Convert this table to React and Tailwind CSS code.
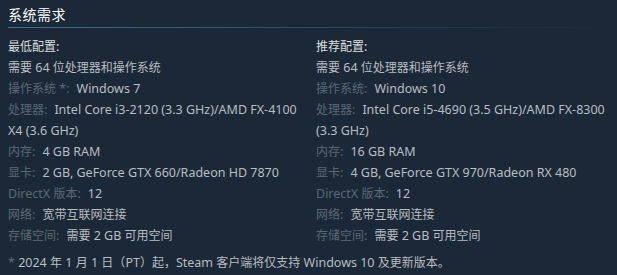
import React from "react";

const FONT = { fontFamily: '"Noto Sans", "Noto Sans CJK SC", sans-serif' };

function T({ children }) {
  const parts = String(children).split(/([\u3000-\u9fff\uff00-\uffef]+)/);
  return (
    <>
      {parts.map((p, i) =>
        /[\u3000-\u9fff\uff00-\uffef]/.test(p) ? (
          <span key={i} className="text-[12px]">
            {p}
          </span>
        ) : (
          <React.Fragment key={i}>{p}</React.Fragment>
        )
      )}
    </>
  );
}

function Row({ label, children }) {
  return (
    <li>
      {label && (
        <span className="text-[#5b6874] mr-[7px]">
          <T>{label}</T>
        </span>
      )}
      <span className="text-[#b9bdc1]">
        <T>{children}</T>
      </span>
    </li>
  );
}

function Col({ title, items }) {
  return (
    <div>
      <div className="text-[#dcdedf]">
        <T>{title}</T>
      </div>
      <ul>
        {items.map((it, i) => (
          <Row key={i} label={it[0]}>
            {it[1]}
          </Row>
        ))}
      </ul>
    </div>
  );
}

export default function App() {
  const min = [
    [null, "需要 64 位处理器和操作系统"],
    ["操作系统 *:", "Windows 7"],
    ["处理器:", "Intel Core i3-2120 (3.3 GHz)/AMD FX\u20114100 X4 (3.6 GHz)"],
    ["内存:", "4 GB RAM"],
    ["显卡:", "2 GB, GeForce GTX 660/Radeon HD 7870"],
    ["DirectX 版本:", "12"],
    ["网络:", "宽带互联网连接"],
    ["存储空间:", "需要 2 GB 可用空间"],
  ];
  const rec = [
    [null, "需要 64 位处理器和操作系统"],
    ["操作系统:", "Windows 10"],
    ["处理器:", "Intel Core i5-4690 (3.5 GHz)/AMD FX\u20118300 (3.3 GHz)"],
    ["内存:", "16 GB RAM"],
    ["显卡:", "4 GB, GeForce GTX 970/Radeon RX 480"],
    ["DirectX 版本:", "12"],
    ["网络:", "宽带互联网连接"],
    ["存储空间:", "需要 2 GB 可用空间"],
  ];
  return (
    <div
      className="w-[617px] h-[275px] bg-[#1b2838] pl-2 overflow-hidden"
      style={FONT}
    >
      <h2 className="text-white text-[14px] leading-[18px] pt-[6px] pb-[3px] tracking-[0.5px]">
        系统需求
      </h2>
      <div className="h-px bg-gradient-to-r from-[#3f7091] via-[#2a4a63] to-[#1b2838]" />
      <div className="text-[12.5px] leading-[21px] pt-[8px]">
        <div className="grid grid-cols-[296px_296px] gap-x-[12px]">
          <Col title="最低配置:" items={min} />
          <Col title="推荐配置:" items={rec} />
        </div>
        <p className="mt-[6px] text-[#b9bdc1]">
          <span className="text-[#5b6874]">*</span>{" "}
          <T>2024 年 1 月 1 日（PT）起，Steam 客户端将仅支持 Windows 10 及更新版本。</T>
        </p>
      </div>
    </div>
  );
}
